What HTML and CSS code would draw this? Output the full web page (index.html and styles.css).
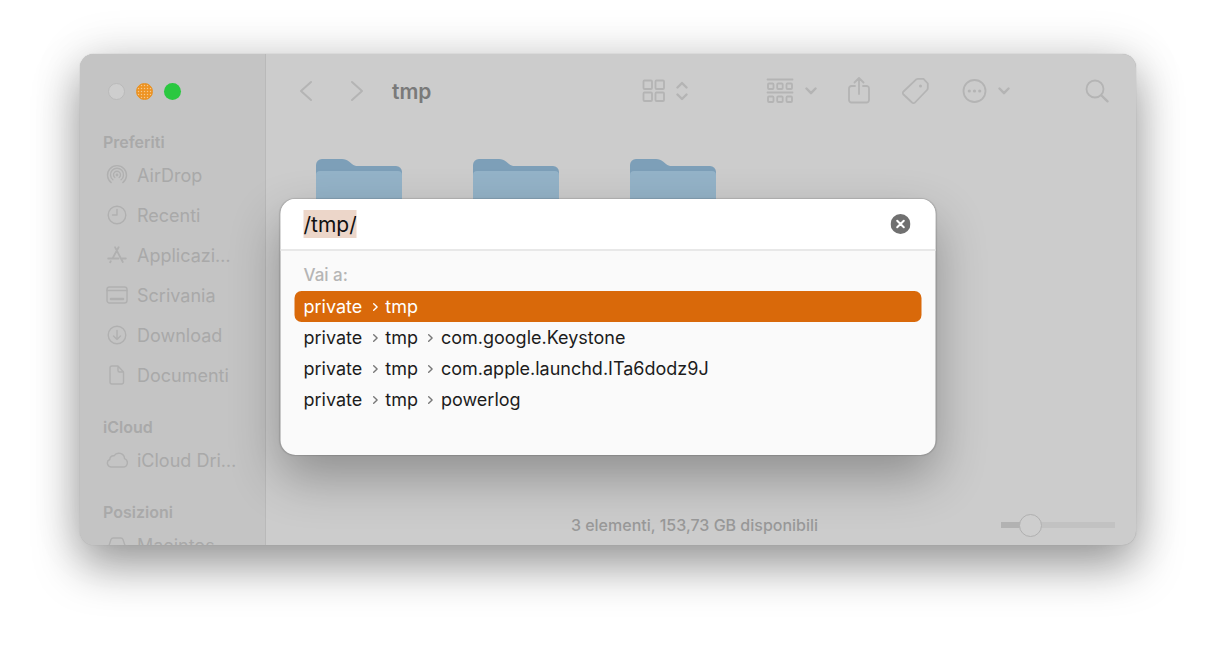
FILE: index.html
```html
<!DOCTYPE html>
<html lang="it">
<head>
<meta charset="utf-8">
<meta name="viewport" content="width=device-width, initial-scale=1">
<title>tmp</title>
<link rel="stylesheet" href="styles.css">
</head>
<body>
<svg class="defs" aria-hidden="true">
  <symbol id="folder" viewBox="0 0 86 72">
    <path fill="#7d9fb8" d="M0 6a6 6 0 0 1 6-6h20c3 0 5 1 7 2.500l3 2.500c2 1.500 3 2 6 2h38a6 6 0 0 1 6 6v52a6 6 0 0 1-6 6H6a6 6 0 0 1-6-6z"/>
    <path fill="#94b3c8" d="M0 16a4 4 0 0 1 4-4h78a4 4 0 0 1 4 4v50a6 6 0 0 1-6 6H6a6 6 0 0 1-6-6z"/>
  </symbol>
  <symbol id="sep" viewBox="0 0 6 8"><path d="M1.200.8 4.600 4 1.200 7.200"/></symbol>
  <symbol id="down" viewBox="0 0 12 8"><path d="M1.500 1.500 6 6.200l4.500-4.700"/></symbol>
</svg>
<main class="window">
  <aside class="sidebar">
    <div class="lights">
      <button class="light close" aria-label="Chiudi"></button>
      <button class="light minimize" aria-label="Riduci"></button>
      <button class="light expand" aria-label="Ingrandisci"></button>
    </div>
    <nav class="places">
      <section>
        <h2>Preferiti</h2>
        <a href="#airdrop"><svg viewBox="0 0 22 22"><path d="M5.200 18.600a9.500 9.500 0 1 1 11.600 0M6.900 15.800a6.500 6.500 0 1 1 8.200 0M8.800 13.500a3.500 3.500 0 1 1 4.400 0"/><circle class="solid" cx="11" cy="11" r="1.400"/></svg><span>AirDrop</span></a>
        <a href="#recenti"><svg viewBox="0 0 22 22"><circle cx="11" cy="11" r="8.800"/><path d="M11 5.500V11H6.500"/></svg><span>Recenti</span></a>
        <a href="#applicazioni"><svg viewBox="0 0 22 22"><path class="medium" d="M9 3.200 16.800 18M12.600 3.200 6.500 14.500M2.200 14.500h10.300M16.200 14.500h3.600M4.800 17.200 4.200 18.300"/></svg><span>Applicazioni</span></a>
        <a href="#scrivania"><svg viewBox="0 0 22 22"><rect x="1" y="3" width="20" height="16" rx="2.500"/><path d="M1 6.500h20"/><path class="thick" d="M5 15h12"/></svg><span>Scrivania</span></a>
        <a href="#download"><svg viewBox="0 0 22 22"><circle cx="11" cy="11" r="8.800"/><path d="M11 6.500v9M7.500 12l3.500 3.500 3.500-3.500"/></svg><span>Download</span></a>
        <a href="#documenti"><svg viewBox="0 0 22 22"><path d="M12 2H6a2 2 0 0 0-2 2v14a2 2 0 0 0 2 2h9.500a2 2 0 0 0 2-2V8zM12 2v4.500A1.500 1.500 0 0 0 13.500 8h4"/></svg><span>Documenti</span></a>
      </section>
      <section>
        <h2>iCloud</h2>
        <a href="#icloud"><svg viewBox="0 0 22 22"><path d="M5 18h12a4.300 4.300 0 0 0 1.600-8.300A5.800 5.800 0 0 0 8 6.800a3.600 3.600 0 0 0-4.200 3.700A3.900 3.900 0 0 0 5 18z"/></svg><span>iCloud Drive</span></a>
      </section>
      <section>
        <h2>Posizioni</h2>
        <a href="#macintosh"><svg viewBox="0 0 22 22"><path d="M2.500 13 5 5.500A2.500 2.500 0 0 1 7.200 4h7.600A2.500 2.500 0 0 1 17 5.500l2.500 7.500v4h-17z"/></svg><span>Macintosh HD</span></a>
      </section>
    </nav>
  </aside>
  <div class="content">
    <header class="toolbar">
      <button class="nav" aria-label="Indietro"><svg width="14" height="22" viewBox="0 0 14 22"><path d="M12 2 2 11l10 9"/></svg></button>
      <button class="nav" aria-label="Avanti"><svg width="14" height="22" viewBox="0 0 14 22"><path d="M2 2l10 9-10 9"/></svg></button>
      <h1>tmp</h1>
      <button class="view" aria-label="Vista"><svg width="24" height="24" viewBox="0 0 24 24"><rect x="1.500" y="1.500" width="8.500" height="8.500" rx="1"/><rect x="13.500" y="1.500" width="8.500" height="8.500" rx="1"/><rect x="1.500" y="13.500" width="8.500" height="8.500" rx="1"/><rect x="13.500" y="13.500" width="8.500" height="8.500" rx="1"/></svg><svg class="bold" width="12" height="20" viewBox="0 0 12 20"><path d="M1.500 6.500 6 2l4.500 4.500M1.500 13.500 6 18l4.500-4.500"/></svg></button>
      <button class="group" aria-label="Raggruppa"><svg width="28" height="26" viewBox="0 0 28 26"><path d="M1.500 1.500h25M1.500 14.500h25"/><rect x="2" y="5.500" width="5.500" height="5.500" rx="1"/><rect x="11.200" y="5.500" width="5.500" height="5.500" rx="1"/><rect x="20.500" y="5.500" width="5.500" height="5.500" rx="1"/><rect x="2" y="18.500" width="5.500" height="5.500" rx="1"/><rect x="11.200" y="18.500" width="5.500" height="5.500" rx="1"/><rect x="20.500" y="18.500" width="5.500" height="5.500" rx="1"/></svg><svg class="bold" width="12" height="8"><use href="#down"/></svg></button>
      <button class="share" aria-label="Condividi"><svg width="22" height="28" viewBox="0 0 22 28"><path d="M7 9H3.500A2.500 2.500 0 0 0 1 11.500V23a2.500 2.500 0 0 0 2.500 2.500h15A2.500 2.500 0 0 0 21 23V11.500A2.500 2.500 0 0 0 18.500 9H15M11 17V1.500M6.500 5.500 11 1l4.500 4.500"/></svg></button>
      <button class="tag" aria-label="Tag"><svg width="28" height="28" viewBox="0 0 28 28"><path d="M15.500 2.200 2.500 14.500a2 2 0 0 0 0 3l8.500 8a2 2 0 0 0 3 0L26 13a3 3 0 0 0 .8-2V6.500L22.500 1.800H17a2.500 2.500 0 0 0-1.500.4z"/><circle class="solid" cx="19.500" cy="9" r="1.500"/></svg></button>
      <button class="more" aria-label="Azioni"><svg width="25" height="26" viewBox="0 0 25 26"><circle cx="12.500" cy="13" r="11"/><circle class="solid" cx="7.300" cy="13" r="1.600"/><circle class="solid" cx="12.500" cy="13" r="1.600"/><circle class="solid" cx="17.700" cy="13" r="1.600"/></svg><svg class="bold" width="12" height="8"><use href="#down"/></svg></button>
      <button class="search" aria-label="Cerca"><svg width="24" height="24" viewBox="0 0 24 24"><circle cx="10" cy="10" r="8.500"/><path class="bold" d="m16.500 16.500 6 5.800"/></svg></button>
    </header>
    <div class="files">
      <svg class="folder"><use href="#folder"/></svg>
      <svg class="folder"><use href="#folder"/></svg>
      <svg class="folder"><use href="#folder"/></svg>
    </div>
    <footer class="status">
      <p>3 elementi, 153,73 GB disponibili</p>
      <input type="range" min="0" max="100" value="20" aria-label="Dimensione icone">
    </footer>
  </div>
  <form class="dialog" role="dialog" aria-label="Vai alla cartella">
    <div class="field">
      <input type="text" value="/tmp/" size="4" aria-label="Percorso">
      <button type="reset" aria-label="Cancella"><svg width="20" height="20" viewBox="0 0 20 20"><circle cx="10" cy="10" r="10"/><path d="m6.700 6.700 6.600 6.600m0-6.600-6.600 6.600"/></svg></button>
    </div>
    <div class="results">
      <h2>Vai a:</h2>
      <a class="selected" href="#tmp"><span>private</span><svg><use href="#sep"/></svg><span>tmp</span></a>
      <a href="#keystone"><span>private</span><svg><use href="#sep"/></svg><span>tmp</span><svg><use href="#sep"/></svg><span>com.google.Keystone</span></a>
      <a href="#launchd"><span>private</span><svg><use href="#sep"/></svg><span>tmp</span><svg><use href="#sep"/></svg><span>com.apple.launchd.ITa6dodz9J</span></a>
      <a href="#powerlog"><span>private</span><svg><use href="#sep"/></svg><span>tmp</span><svg><use href="#sep"/></svg><span>powerlog</span></a>
    </div>
  </form>
</main>
</body>
</html>
```
FILE: styles.css
```css
* { box-sizing: border-box; }

body {
  display: flex;
  height: 100vh;
  margin: 0;
  padding: 54px 80px 105px;
  overflow: hidden;
  background: #fff;
  font-family: Inter, "Liberation Sans", sans-serif;
  font-size: 18px;
}

h1, h2, p { margin: 0; }
a { color: inherit; text-decoration: none; }
button { padding: 0; border: 0; background: none; color: inherit; }
svg { display: block; flex: none; fill: none; stroke: currentColor; stroke-linecap: round; stroke-linejoin: round; }
.solid { fill: currentColor; stroke: none; }
.defs { position: absolute; width: 0; height: 0; }

.window {
  position: relative;
  display: flex;
  flex: 1;
  min-width: 0;
  border-radius: 14px;
  background: #ccc;
  box-shadow: 0 0 1px #999, 0 22px 46px rgba(0, 0, 0, .36), 0 0 50px rgba(0, 0, 0, .12);
}

.sidebar {
  flex: 0 0 186px;
  overflow: hidden;
  border-right: 1px solid #b9b9b9;
  border-radius: 14px 0 0 14px;
  background: #c4c4c4;
  color: #a9a9a9;
}

.lights { display: flex; align-items: center; gap: 11px; height: 75px; padding: 0 0 1px 28px; }
.light { width: 17px; height: 17px; border-radius: 50%; }
.close { border: 1px solid #bababa; background: #cecece; }
.minimize { border: 1px solid #e8901f; background: radial-gradient(#f5c98e 25%, #ee9423 50%) 0 0 / 3px 3px; }
.expand { background: #2ac840; }

.places { display: grid; gap: 19px; padding: 0 28px 0 23px; }
.places section { min-width: 0; }
.places h2 { font-size: 16px; line-height: 26px; font-weight: 600; }
.places a { display: flex; align-items: center; gap: 9px; height: 40px; padding-left: 3px; }
.places svg { width: 22px; height: 22px; color: #b0b0b0; stroke-width: 1.4; }
.places .medium { stroke-width: 1.8; }
.places .thick { stroke-width: 2.6; }
.places span { overflow: hidden; text-overflow: ellipsis; white-space: nowrap; }

.content { display: flex; flex: 1; flex-direction: column; min-width: 0; }

.toolbar {
  display: flex;
  align-items: center;
  height: 74px;
  padding: 0 27px 0 33px;
  color: #b4b4b4;
}
.toolbar button { display: flex; align-items: center; justify-content: space-between; }
.toolbar svg { stroke-width: 1.8; }
.toolbar .bold { stroke-width: 2.4; }
.toolbar .nav { margin-right: 37px; }
.toolbar .nav svg { stroke-width: 2; }
.toolbar .nav + .nav { margin-right: 28px; }
.toolbar h1 { flex: 1; color: #7a7a7a; font-size: 21px; font-weight: 600; }
.view { width: 46px; margin-right: 78px; }
.group { width: 51px; margin-right: 31px; }
.share { margin-right: 31px; }
.tag { margin-right: 33px; }
.more { width: 48px; margin-right: 75px; }

.files { display: flex; flex: 1; gap: 71px; padding: 31px 50px; }
.folder { width: 86px; height: 72px; stroke: none; }

.status {
  display: grid;
  grid-template-columns: 1fr auto 1fr;
  align-items: center;
  height: 40px;
  padding: 0 21px 0 8px;
  color: #999;
  font-size: 16px;
  font-weight: 500;
}
.status p { grid-column: 2; }
.status input {
  justify-self: end;
  width: 114px;
  height: 24px;
  margin: 0;
  appearance: none;
  background: linear-gradient(90deg, #b2b2b2 25%, #c2c2c2 25%) center / 100% 6px no-repeat;
}
.status input::-webkit-slider-thumb {
  appearance: none;
  width: 23px;
  height: 23px;
  border: 1px solid #b0b0b0;
  border-radius: 50%;
  background: #cecece;
}

.dialog {
  position: absolute;
  top: 145px;
  left: 50%;
  width: 655px;
  max-width: 100%;
  transform: translateX(-50%);
  overflow: hidden;
  border-radius: 15px;
  background: #fafafa;
  color: #1c1c1c;
  box-shadow: 0 0 1px 1px rgba(0, 0, 0, .12), 0 22px 50px rgba(0, 0, 0, .3);
}

.field {
  display: flex;
  align-items: center;
  justify-content: space-between;
  height: 52px;
  padding: 0 25px 0 23px;
  border-bottom: 2px solid #e8e8e8;
  background: #fff;
}
.field input {
  field-sizing: content;
  height: 28px;
  padding: 0;
  border: 0;
  outline: 0;
  background: #ecd6c9;
  color: #111;
  font: inherit;
  font-size: 21px;
}
.field circle { fill: #707070; stroke: none; }
.field path { stroke: #fff; stroke-width: 2; }

.results { padding: 10px 14px 40px; }
.results h2 { padding: 0 0 2px 9px; color: #b5b5b5; font-size: 17px; line-height: 28px; font-weight: 500; }
.results a { display: flex; align-items: center; height: 31px; padding-left: 9px; border-radius: 7px; }
.results svg { width: 6px; height: 8px; margin: 0 7px 0 10px; color: #777; stroke-width: 1.4; }
.results .selected { background: #d9690a; color: #fff; }
.results .selected svg { color: #fff; }
```
